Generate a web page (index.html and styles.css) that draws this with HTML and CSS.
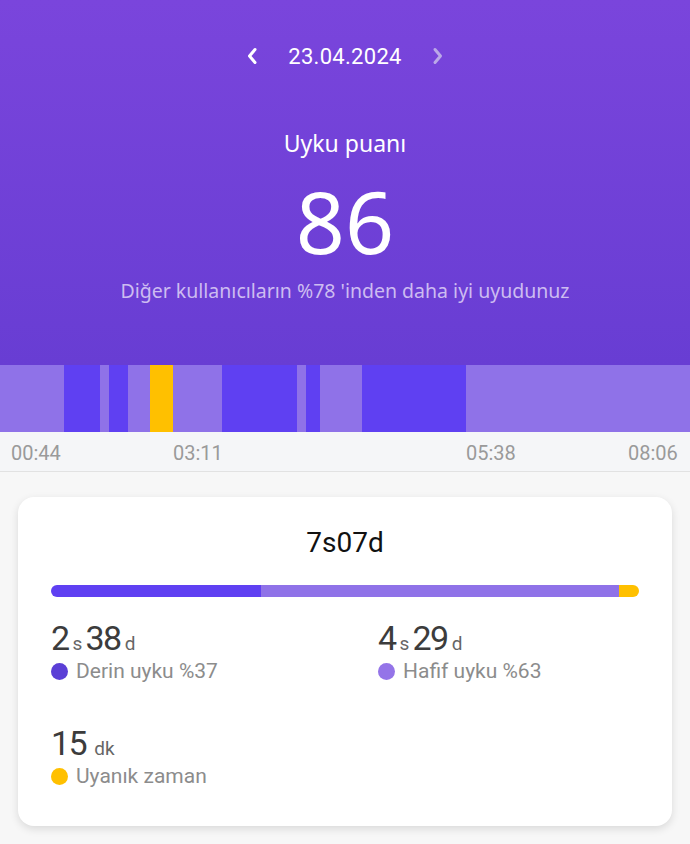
FILE: index.html
```html
<!DOCTYPE html>
<html>
<head>
    <meta charset="utf-8">
    <title>Uyku</title>
    <meta name="viewport" content="width=device-width, initial-scale=1">
    <link rel="stylesheet" href="styles.css">
</head>
<body>
    <div class="header">
        <div class="date-nav">
            <svg class="chev" width="12" height="18" viewBox="0 0 12 18"><path d="M9 2.5 L3.5 9 L9 15.5" fill="none" stroke="#fff" stroke-width="3" stroke-linecap="round" stroke-linejoin="round"/></svg>
            <span class="date">23.04.2024</span>
            <svg class="chev chev-off" width="12" height="18" viewBox="0 0 12 18"><path d="M3 2.5 L8.5 9 L3 15.5" fill="none" stroke="#bba8e8" stroke-width="3" stroke-linecap="round" stroke-linejoin="round"/></svg>
        </div>
        <div class="score-title">Uyku puanı</div>
        <div class="score">86</div>
        <div class="score-note">Diğer kullanıcıların %78 'inden daha iyi uyudunuz</div>
    </div>

    <div class="chart">
        <div class="seg light" style="width:64px"></div>
        <div class="seg deep" style="width:36px"></div>
        <div class="seg light" style="width:9px"></div>
        <div class="seg deep" style="width:19px"></div>
        <div class="seg light" style="width:22px"></div>
        <div class="seg awake" style="width:23px"></div>
        <div class="seg light" style="width:49px"></div>
        <div class="seg deep" style="width:75px"></div>
        <div class="seg light" style="width:9px"></div>
        <div class="seg deep" style="width:14px"></div>
        <div class="seg light" style="width:42px"></div>
        <div class="seg deep" style="width:104px"></div>
        <div class="seg light rest"></div>
    </div>
    <div class="axis">
        <span class="tick" style="left:11px">00:44</span>
        <span class="tick" style="left:173px">03:11</span>
        <span class="tick" style="left:466px">05:38</span>
        <span class="tick" style="left:628px">08:06</span>
    </div>

    <div class="card">
        <div class="total">7s07d</div>
        <div class="bar">
            <div class="deep" style="width:210px"></div>
            <div class="light" style="width:358px"></div>
            <div class="awake rest"></div>
        </div>
        <div class="stats">
            <div class="stat">
                <div class="value">2<span class="unit">s</span>38<span class="unit">d</span></div>
                <div class="legend"><span class="dot dot-deep"></span>Derin uyku %37</div>
            </div>
            <div class="stat">
                <div class="value">4<span class="unit">s</span>29<span class="unit">d</span></div>
                <div class="legend"><span class="dot dot-light"></span>Hafif uyku %63</div>
            </div>
            <div class="stat">
                <div class="value">15<span class="unit unit-wide">dk</span></div>
                <div class="legend"><span class="dot dot-awake"></span>Uyanık zaman</div>
            </div>
        </div>
    </div>
</body>
</html>
```

FILE: styles.css
```css
body {
    margin: 0;
    background: #f7f7f7;
    font-family: Roboto, "Noto Sans", sans-serif;
}
.header {
    height: 365px;
    box-sizing: border-box;
    padding-top: 36px;
    background: linear-gradient(#7a45dc, #683dd3);
    color: #fff;
    text-align: center;
}
.date-nav {
    display: flex;
    justify-content: center;
    align-items: center;
    gap: 30px;
    height: 40px;
}
.date {
    font-size: 22px;
    letter-spacing: 0.3px;
}
.score-title {
    margin-top: 52px;
    font-family: "Noto Sans", sans-serif;
    font-size: 23px;
    line-height: 30px;
}
.score {
    margin-top: 18px;
    font-family: "Noto Sans", sans-serif;
    font-size: 86px;
    line-height: 90px;
}
.score-note {
    margin-top: 12px;
    font-family: "Noto Sans", sans-serif;
    font-size: 19.5px;
    line-height: 26px;
    color: #cdbcf1;
}
.chart {
    display: flex;
    height: 67px;
}
.seg {
    flex: none;
}
.rest {
    flex: 1;
}
.light {
    background: #8f72e8;
}
.deep {
    background: #5f40f2;
}
.awake {
    background: #ffc000;
}
.axis {
    position: relative;
    height: 39px;
    background: #f5f6f8;
    border-bottom: 1px solid #e2e2e2;
}
.tick {
    position: absolute;
    top: 9px;
    font-size: 20px;
    color: #9a9a9a;
}
.card {
    margin: 25px 18px;
    padding: 29px 33px 38px;
    background: #fff;
    border-radius: 16px;
    box-shadow: 0 3px 8px rgba(0,0,0,0.12);
}
.total {
    text-align: center;
    font-size: 28px;
    line-height: 34px;
    color: #111;
}
.bar {
    display: flex;
    height: 12px;
    margin-top: 25px;
    border-radius: 6px;
    overflow: hidden;
}
.bar div {
    flex: none;
}
.bar .rest {
    flex: 1;
}
.stats {
    display: grid;
    grid-template-columns: 327px 1fr;
    row-gap: 41px;
    margin-top: 22px;
}
.value {
    height: 38px;
    font-size: 34px;
    line-height: 38px;
    letter-spacing: -1.5px;
    color: #3c3c3c;
}
.unit {
    font-size: 19px;
    line-height: 1;
    letter-spacing: 0;
    color: #666;
    margin: 0 3px 0 4px;
}
.unit-wide {
    margin-left: 8px;
}
.legend {
    display: flex;
    align-items: center;
    margin-top: 2px;
    font-size: 21px;
    line-height: 24px;
    color: #8c8c8c;
}
.dot {
    width: 17px;
    height: 17px;
    border-radius: 50%;
    margin-right: 8px;
}
.dot-deep {
    background: #5b3fd6;
}
.dot-light {
    background: #9474e8;
}
.dot-awake {
    background: #ffc000;
}
```
